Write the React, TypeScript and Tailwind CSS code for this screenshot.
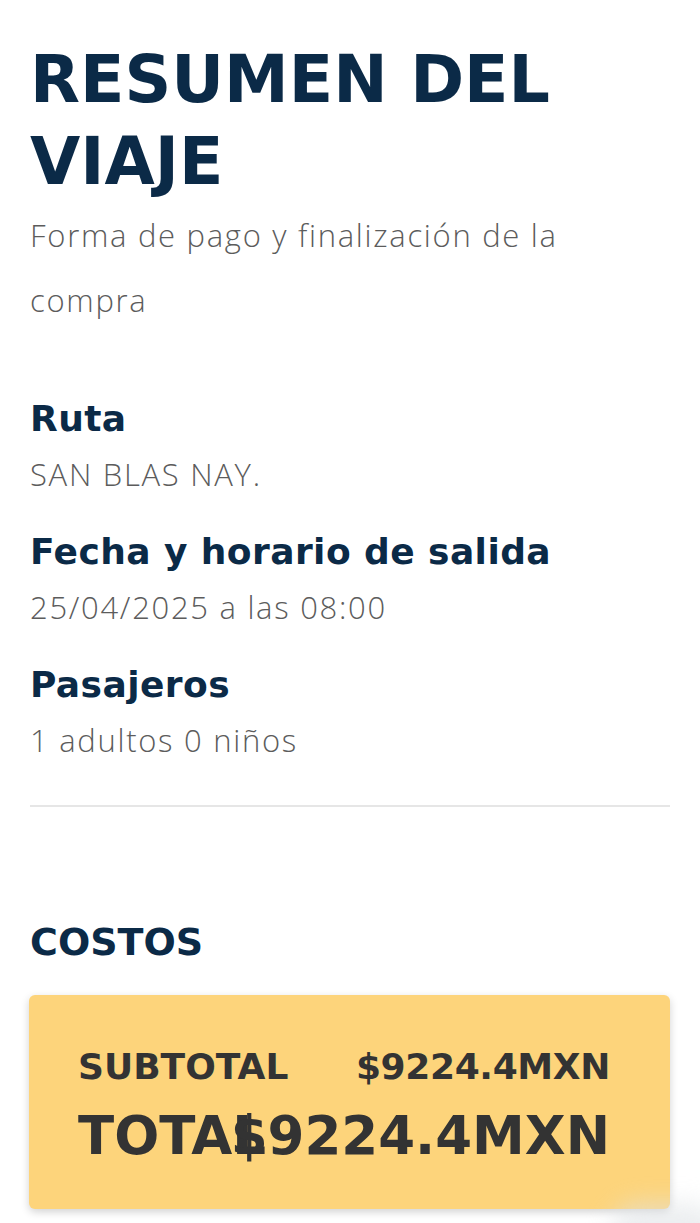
// App.tsx — resumen del viaje (checkout summary)
import React from 'react';

const HEAD = "font-['DejaVu_Sans',sans-serif] font-bold text-[#0b2a47]";
const BODY = "font-['Open_Sans',sans-serif] font-light text-[#5c5c5c]";

const details = [
  { label: 'Ruta', value: 'SAN BLAS NAY.' },
  { label: 'Fecha y horario de salida', value: '25/04/2025 a las 08:00' },
  { label: 'Pasajeros', value: '1 adultos 0 niños' },
];

const App: React.FC = () => {
  const subtotal = '$9224.4MXN';
  const total = '$9224.4MXN';

  return (
    <div className="relative min-h-[1223px] bg-white px-[30px] pt-[39px] overflow-hidden">
      <h1 className={`${HEAD} text-[65px] leading-[82px]`}>RESUMEN DEL VIAJE</h1>
      <p className={`${BODY} text-[31px] leading-[65px] tracking-[0.055em] pr-[90px]`}>
        Forma de pago y finalización de la compra
      </p>

      <div className="mt-[64px] flex flex-col gap-[36px]">
        {details.map(d => (
          <div key={d.label} className="flex flex-col gap-[13px]">
            <h2 className={`${HEAD} text-[36px] leading-[44px] tracking-[0.012em]`}>{d.label}</h2>
            <p className={`${BODY} text-[31px] leading-[40px] tracking-[0.055em]`}>{d.value}</p>
          </div>
        ))}
      </div>

      <div className="mt-[45px] h-[2px] bg-[#e6e6e6]" />

      {/* Costos */}
      <h2 className={`${HEAD} text-[38px] leading-[46px] mt-[112px]`}>COSTOS</h2>
      <div className="mt-[30px] -ml-px rounded-md bg-[#fdd47b] shadow-[0_3px_8px_rgba(0,0,0,0.18)] pl-[49px] pr-[60px] pt-[50px] pb-[43px] font-['DejaVu_Sans',sans-serif] font-bold text-[#333333]">
        <div className="grid grid-cols-2 items-center">
          <span className="text-[36px] leading-[44px] whitespace-nowrap">SUBTOTAL</span>
          <div className="flex justify-end">
            <span className="text-[36px] leading-[44px] tracking-[-0.01em] whitespace-nowrap">{subtotal}</span>
          </div>
        </div>
        <div className="grid grid-cols-2 items-center mt-[17px]">
          <span className="text-[53px] leading-[60px] whitespace-nowrap">TOTAL</span>
          <div className="flex justify-end">
            <span className="text-[53px] leading-[60px] whitespace-nowrap">{total}</span>
          </div>
        </div>
      </div>

      {/* faint shadow of a floating element at the bottom edge */}
      <div className="absolute right-[-20px] bottom-[-40px] w-[110px] h-[60px] rounded-full bg-[#dfe3e6] blur-[12px] opacity-60" />
    </div>
  );
};

export default App;
